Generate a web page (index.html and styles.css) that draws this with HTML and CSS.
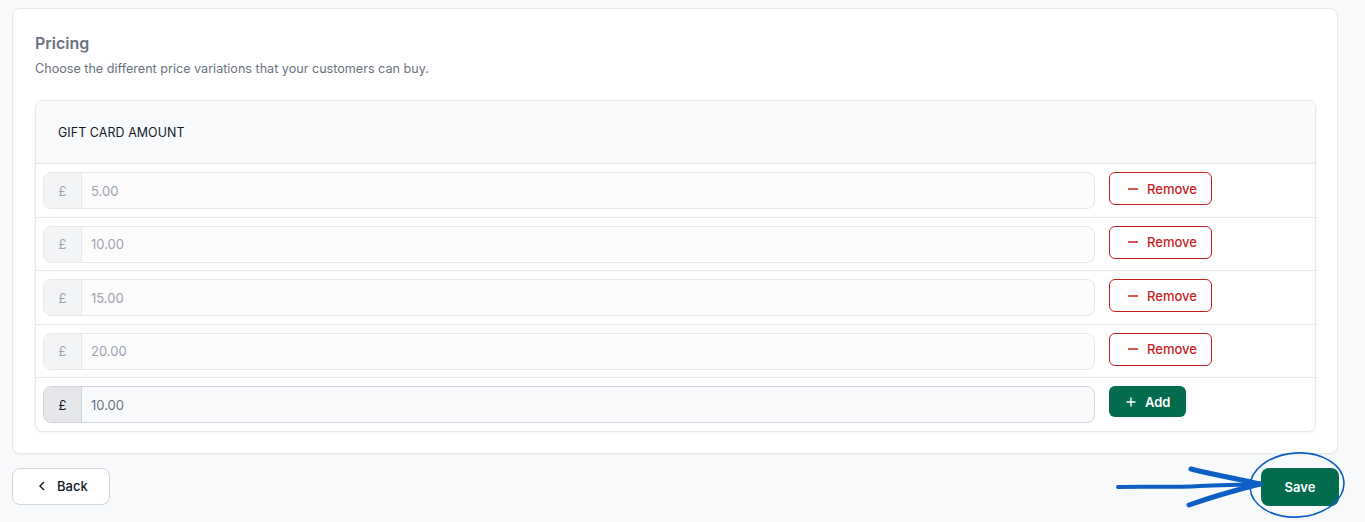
FILE: index.html
```html
<!DOCTYPE html>
<html lang="en">
<head>
<meta charset="utf-8">
<title>Pricing</title>
<link rel="stylesheet" href="styles.css">
</head>
<body>
<div class="page">
  <section class="card">
    <h2 class="title">Pricing</h2>
    <p class="subtitle">Choose the different price variations that your customers can buy.</p>
    <div class="table">
      <div class="thead">GIFT CARD AMOUNT</div>
      <div class="row">
        <div class="field"><span class="prefix">£</span><span class="value">5.00</span></div>
        <div class="actions"><button class="btn-remove"><svg class="minus" viewBox="0 0 10 4" width="10" height="4"><path d="M0 2H10" stroke="#c81e1e" stroke-width="1.5"/></svg>Remove</button></div>
      </div>
      <div class="row">
        <div class="field"><span class="prefix">£</span><span class="value">10.00</span></div>
        <div class="actions"><button class="btn-remove"><svg class="minus" viewBox="0 0 10 4" width="10" height="4"><path d="M0 2H10" stroke="#c81e1e" stroke-width="1.5"/></svg>Remove</button></div>
      </div>
      <div class="row">
        <div class="field"><span class="prefix">£</span><span class="value">15.00</span></div>
        <div class="actions"><button class="btn-remove"><svg class="minus" viewBox="0 0 10 4" width="10" height="4"><path d="M0 2H10" stroke="#c81e1e" stroke-width="1.5"/></svg>Remove</button></div>
      </div>
      <div class="row">
        <div class="field"><span class="prefix">£</span><span class="value">20.00</span></div>
        <div class="actions"><button class="btn-remove"><svg class="minus" viewBox="0 0 10 4" width="10" height="4"><path d="M0 2H10" stroke="#c81e1e" stroke-width="1.5"/></svg>Remove</button></div>
      </div>
      <div class="row">
        <div class="field field-active"><span class="prefix">£</span><span class="value">10.00</span></div>
        <div class="actions"><button class="btn-add"><svg class="plus" viewBox="0 0 10 10" width="10" height="10"><path d="M5 0.5V9.5M0.5 5H9.5" stroke="#fff" stroke-width="1.4" fill="none"/></svg>Add</button></div>
      </div>
    </div>
  </section>
  <div class="footer">
    <button class="btn-back"><svg class="chev" viewBox="0 0 8 12" width="8" height="12"><path d="M6 2L2 6L6 10" stroke="#111827" stroke-width="1.4" fill="none"/></svg>Back</button>
    <button class="btn-save">Save</button>
  </div>
  <svg class="annotation" width="1365" height="522" viewBox="0 0 1365 522">
    <path d="M1118 487 C1150 486.5 1175 487.5 1200 486 C1225 485 1245 485 1258 484" stroke="#0d5fc4" stroke-width="4" fill="none" stroke-linecap="round"/>
    <path d="M1191 469 C1215 475 1238 479 1260 484" stroke="#0d5fc4" stroke-width="5" fill="none" stroke-linecap="round"/>
    <path d="M1189 505 C1212 497 1236 490 1260 484" stroke="#0d5fc4" stroke-width="5" fill="none" stroke-linecap="round"/>
    <ellipse cx="1297" cy="485" rx="47" ry="32" transform="rotate(-4 1297 485)" stroke="#0d5fc4" stroke-width="1.6" fill="none"/>
  </svg>
</div>
</body>
</html>
```

FILE: styles.css
```css
* { box-sizing: border-box; }
html, body { margin: 0; padding: 0; }
body {
  background: #f8f9fb;
  font-family: Inter, "Noto Sans", "Liberation Sans", sans-serif;
  color: #111827;
  width: 1365px;
  height: 522px;
  overflow: hidden;
}
.page {
  position: relative;
  padding: 8px 27px 0 12px;
  height: 522px;
}
.card {
  background: #fff;
  border: 1px solid #e5e7eb;
  border-radius: 8px;
  padding: 22px 21px 21px 22px;
  box-shadow: 0 1px 2px rgba(17, 24, 39, 0.04);
}
.title {
  margin: 0;
  font-size: 16px;
  line-height: 24px;
  font-weight: 600;
  color: #6b7280;
}
.subtitle {
  margin: 4px 0 21px;
  font-size: 12.6px;
  line-height: 20px;
  color: #6b7280;
}
.table {
  border: 1px solid #e5e7eb;
  border-radius: 8px;
  overflow: hidden;
  box-shadow: 0 1px 3px rgba(17, 24, 39, 0.06);
}
.thead {
  height: 62px;
  background: #f9fafb;
  display: flex;
  align-items: center;
  padding: 0 22px;
  font-size: 12.4px;
  color: #111827;
  letter-spacing: 0.1px;
}
.row {
  display: grid;
  grid-template-columns: 1fr 214px;
  border-top: 1px solid #e5e7eb;
  padding: 8px 0 8px 7px;
  height: 53.5px;
  align-items: start;
}
.field {
  display: flex;
  height: 37px;
  border: 1px solid #e5e7eb;
  border-radius: 8px;
  overflow: hidden;
  margin-right: 6px;
  background: #fcfcfd;
  font-size: 13px;
}
.prefix {
  width: 38px;
  flex: none;
  display: flex;
  align-items: center;
  justify-content: center;
  background: #f3f4f6;
  border-right: 1px solid #e5e7eb;
  color: #9ca3af;
}
.value {
  display: flex;
  align-items: center;
  padding-left: 9px;
  color: #9ca3af;
}
.field-active {
  border-color: #d1d5db;
  background: #f9fafb;
}
.field-active .prefix {
  background: #e5e7eb;
  border-right-color: #d1d5db;
  color: #111827;
}
.field-active .value { color: #6b7280; }
.actions {
  padding-left: 8px;
  display: flex;
}
button {
  font-family: inherit;
  cursor: pointer;
}
.btn-remove {
  display: flex;
  align-items: center;
  width: 103px;
  height: 33px;
  padding: 0 0 0 18px;
  border: 1px solid #c81e1e;
  border-radius: 6px;
  background: #fff;
  color: #c81e1e;
  font-size: 13px;
  font-weight: 500;
}
.minus {
  margin-right: 9px;
}
.btn-add {
  display: flex;
  align-items: center;
  width: 77px;
  height: 31px;
  padding: 0 0 0 17px;
  border: 0;
  border-radius: 6px;
  background: #046c4e;
  color: #fff;
  font-size: 13px;
  font-weight: 600;
}
.plus { margin-right: 9px; }
.footer {
  display: flex;
  justify-content: space-between;
  align-items: flex-start;
  margin-top: 14px;
}
.btn-back {
  display: flex;
  align-items: center;
  width: 98px;
  height: 37px;
  padding: 0 0 0 25px;
  background: #fff;
  border: 1px solid #d1d5db;
  border-radius: 8px;
  color: #111827;
  font-size: 13px;
  font-weight: 500;
}
.chev { margin-right: 11px; }
.btn-save {
  width: 78px;
  height: 38px;
  margin-right: -1px;
  border: 0;
  border-radius: 8px;
  background: #046c4e;
  color: #fff;
  font-size: 13px;
  font-weight: 600;
}
.annotation {
  position: absolute;
  left: 0;
  top: 0;
  pointer-events: none;
}
```
